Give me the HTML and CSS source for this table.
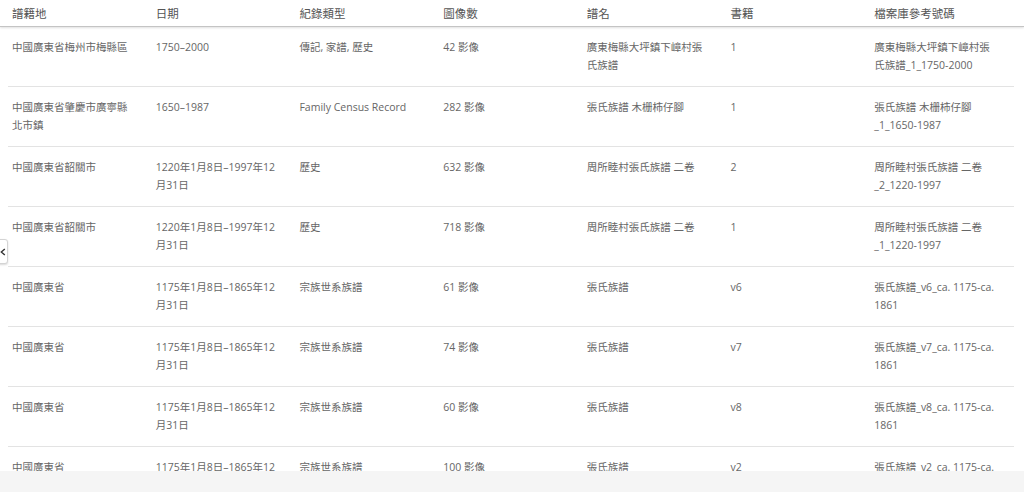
FILE: index.html
```html
<!DOCTYPE html>
<html lang="zh-Hant">
<head>
<meta charset="utf-8">
<title>譜籍</title>
<link rel="stylesheet" href="styles.css">
</head>
<body>
<div class="page">
  <div class="head">
    <div class="grid">
      <div class="hc">譜籍地</div>
      <div class="hc">日期</div>
      <div class="hc">紀錄類型</div>
      <div class="hc">圖像數</div>
      <div class="hc">譜名</div>
      <div class="hc">書籍</div>
      <div class="hc">檔案庫參考號碼</div>
    </div>
  </div>
  <div class="body">
    <div class="grid row">
      <div class="c">中國廣東省梅州市梅縣區</div>
      <div class="c">1750–2000</div>
      <div class="c">傳記, 家譜, 歷史</div>
      <div class="c">42 影像</div>
      <div class="c">廣東梅縣大坪鎮下嶂村張氏族譜</div>
      <div class="c">1</div>
      <div class="c">廣東梅縣大坪鎮下嶂村張氏族譜_1_1750-2000</div>
    </div>
    <div class="grid row">
      <div class="c">中國廣東省肇慶市廣寧縣北市鎮</div>
      <div class="c">1650–1987</div>
      <div class="c">Family Census Record</div>
      <div class="c">282 影像</div>
      <div class="c">張氏族譜 木栅柿仔腳</div>
      <div class="c">1</div>
      <div class="c">張氏族譜 木栅柿仔腳_1_1650-1987</div>
    </div>
    <div class="grid row">
      <div class="c">中國廣東省韶關市</div>
      <div class="c">1220年1月8日–1997年12月31日</div>
      <div class="c">歷史</div>
      <div class="c">632 影像</div>
      <div class="c">周所睦村張氏族譜 二卷</div>
      <div class="c">2</div>
      <div class="c">周所睦村張氏族譜 二卷_2_1220-1997</div>
    </div>
    <div class="grid row">
      <div class="c">中國廣東省韶關市</div>
      <div class="c">1220年1月8日–1997年12月31日</div>
      <div class="c">歷史</div>
      <div class="c">718 影像</div>
      <div class="c">周所睦村張氏族譜 二卷</div>
      <div class="c">1</div>
      <div class="c">周所睦村張氏族譜 二卷_1_1220-1997</div>
    </div>
    <div class="grid row">
      <div class="c">中國廣東省</div>
      <div class="c">1175年1月8日–1865年12月31日</div>
      <div class="c">宗族世系族譜</div>
      <div class="c">61 影像</div>
      <div class="c">張氏族譜</div>
      <div class="c">v6</div>
      <div class="c">張氏族譜_v6_ca. 1175-ca. 1861</div>
    </div>
    <div class="grid row">
      <div class="c">中國廣東省</div>
      <div class="c">1175年1月8日–1865年12月31日</div>
      <div class="c">宗族世系族譜</div>
      <div class="c">74 影像</div>
      <div class="c">張氏族譜</div>
      <div class="c">v7</div>
      <div class="c">張氏族譜_v7_ca. 1175-ca. 1861</div>
    </div>
    <div class="grid row">
      <div class="c">中國廣東省</div>
      <div class="c">1175年1月8日–1865年12月31日</div>
      <div class="c">宗族世系族譜</div>
      <div class="c">60 影像</div>
      <div class="c">張氏族譜</div>
      <div class="c">v8</div>
      <div class="c">張氏族譜_v8_ca. 1175-ca. 1861</div>
    </div>
    <div class="grid row">
      <div class="c">中國廣東省</div>
      <div class="c">1175年1月8日–1865年12月31日</div>
      <div class="c">宗族世系族譜</div>
      <div class="c">100 影像</div>
      <div class="c">張氏族譜</div>
      <div class="c">v2</div>
      <div class="c">張氏族譜_v2_ca. 1175-ca. 1861</div>
    </div>
  </div>
  <button class="toggle" type="button" aria-label="收合">
    <svg width="8" height="10" viewBox="0 0 8 10"><path d="M5.5 1.5 L1.5 5 L5.5 8.5" fill="none" stroke="#333" stroke-width="1.6"/></svg>
  </button>
  <div class="footer"></div>
</div>
</body>
</html>
```

FILE: styles.css
```css
html, body {
  margin: 0;
  padding: 0;
  background: #fff;
}
body {
  font-family: "Open Sans", "Noto Sans CJK TC", sans-serif;
  font-size: 10.5px;
  color: #666;
  overflow: hidden;
}
.page {
  position: relative;
  width: 1024px;
  height: 492px;
  overflow: hidden;
}
.grid {
  display: grid;
  grid-template-columns: repeat(7, 1fr);
}
.head {
  height: 27px;
  box-sizing: border-box;
  padding: 0 10px 0 8px;
  border-bottom: 1px solid #c4c4c4;
  box-shadow: 0 1px 2px rgba(0, 0, 0, 0.12);
  position: relative;
  z-index: 1;
}
.hc {
  padding: 5px 16px 0 4px;
  line-height: 18px;
  font-size: 11.5px;
  color: #555;
}
.body {
  padding: 0 10px 0 8px;
}
.row {
  height: 60px;
  box-sizing: border-box;
  border-bottom: 1px solid #e3e3e3;
}
.c {
  padding: 11px 16px 0 4px;
  line-height: 18px;
}
.toggle {
  position: absolute;
  left: -12px;
  top: 239px;
  width: 20px;
  height: 25px;
  padding: 0 0 0 11px;
  border: 1px solid #d4d4d4;
  border-radius: 0 3px 3px 0;
  background: #fff;
  box-shadow: 0 1px 2px rgba(0, 0, 0, 0.15);
  display: flex;
  align-items: center;
  cursor: pointer;
}
.footer {
  position: absolute;
  left: 0;
  right: 0;
  bottom: 0;
  height: 21px;
  background: #f5f5f5;
}
```
